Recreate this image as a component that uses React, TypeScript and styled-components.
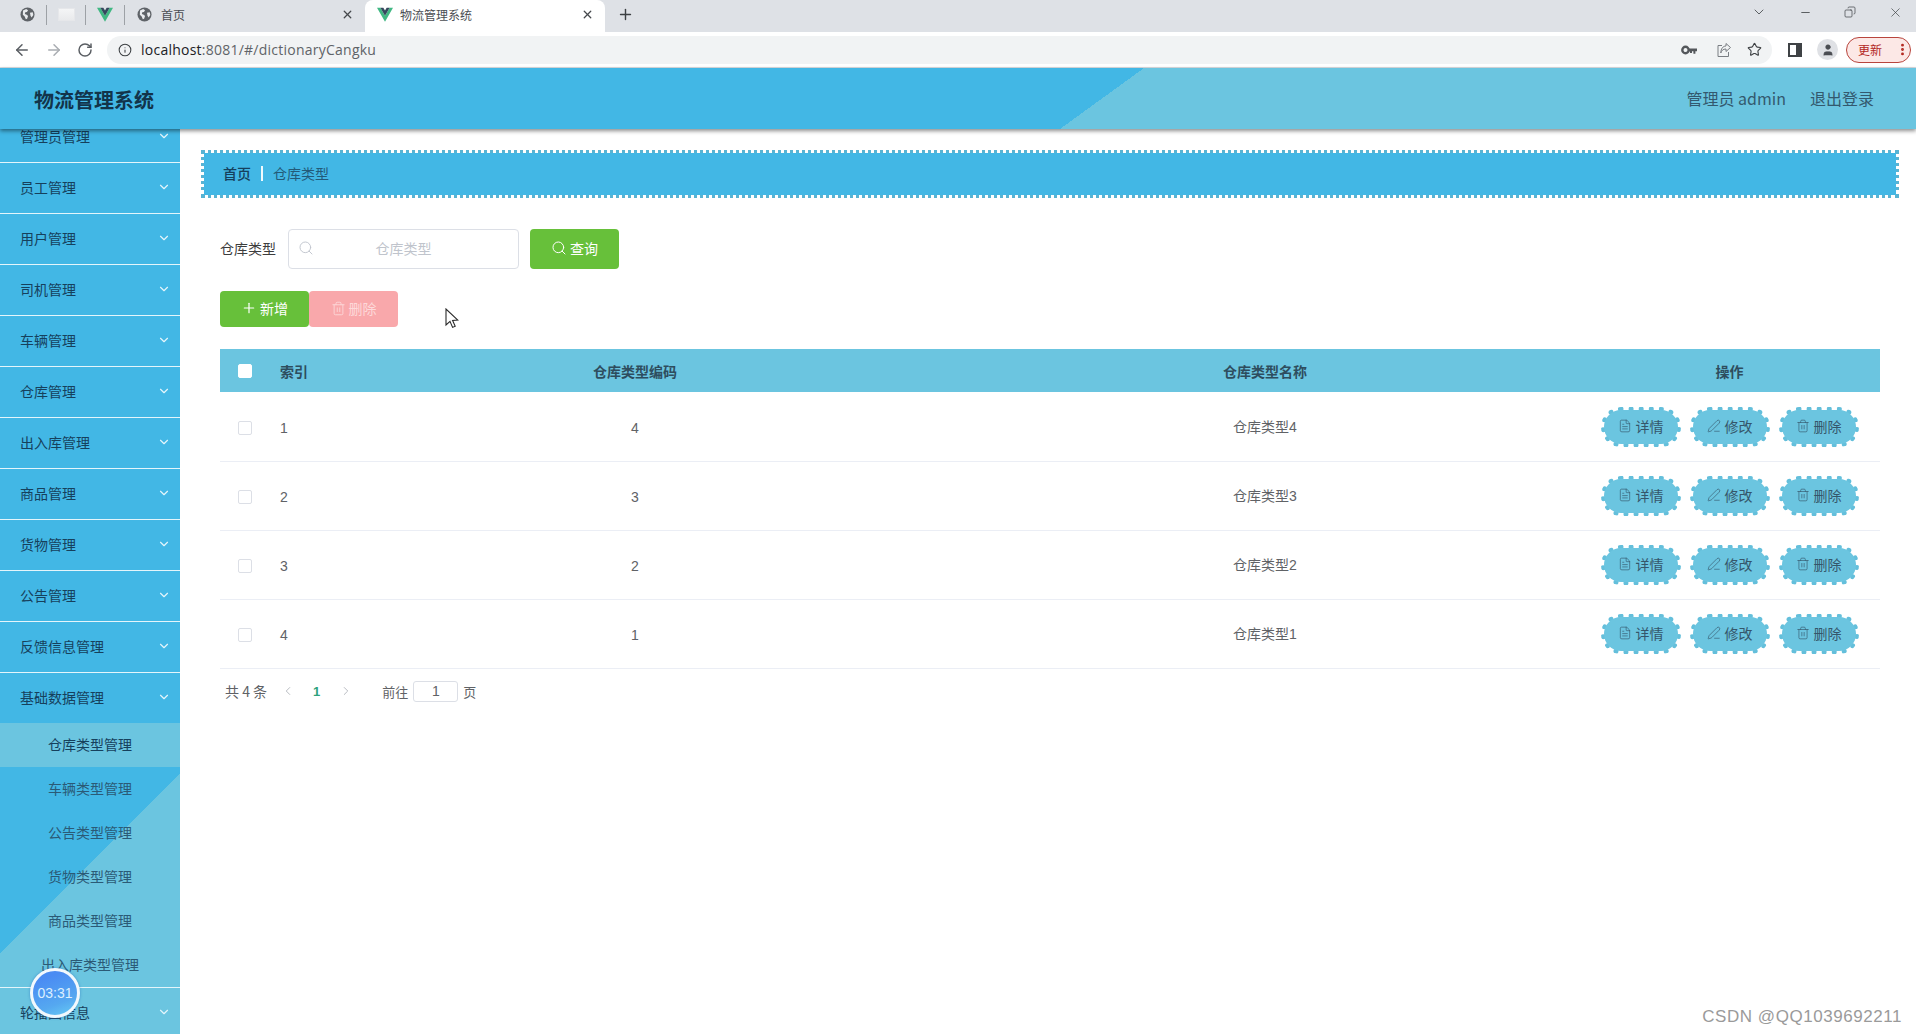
import React from "react";
import styled, { createGlobalStyle } from "styled-components";
import {
  ArrowLeft, ArrowRight, RotateCw, Info, Star, X, Plus, Minus,
  ChevronDown, ChevronLeft, ChevronRight, Search, Trash2, PenLine, FileText, EllipsisVertical, User, CopyIcon,
} from "lucide-react";

const CJK = `"Noto Sans CJK SC", "Liberation Sans", sans-serif`;
const TEXT = `"Liberation Sans", "Noto Sans CJK SC", sans-serif`;

const Global = createGlobalStyle`
  html, body { margin: 0; padding: 0; height: 100%; overflow: hidden; background: #fff; }
  * { box-sizing: border-box; }
  body { font-family: ${TEXT}; }
`;

const Page = styled.div`
  position: relative;
  width: 1916px;
  height: 1034px;
  display: flex;
  flex-direction: column;
  overflow: hidden;
`;

const TabStrip = styled.div`
  height: 32px;
  background: #dee1e6;
  display: flex;
  align-items: center;
  padding-left: 8px;
  flex: none;
`;
const Pinned = styled.div`
  width: 39px;
  height: 20px;
  margin-bottom: 3px;
  display: flex;
  align-items: center;
  justify-content: center;
  border-right: 1px solid #9da1a6;
  color: #5f6368;
`;
const BlankThumb = styled.div`
  width: 17px;
  height: 13px;
  background: linear-gradient(#f4f5f6, #e9eaec);
  border: 1px solid #e6e7ea;
`;
const Tab = styled.div<{ $active?: boolean }>`
  height: 32px;
  display: flex;
  align-items: center;
  gap: ${(p) => (p.$active ? "7px" : "9px")};
  width: ${(p) => (p.$active ? "240px" : "233px")};
  margin-left: ${(p) => (p.$active ? "7px" : "0")};
  padding: ${(p) => (p.$active ? "0 11px 3px 12px" : "0 4px 3px 12px")};
  background: ${(p) => (p.$active ? "#fff" : "transparent")};
  border-radius: 8px 8px 0 0;
  font-size: 12px;
  color: #4a4d52;
  font-family: ${CJK};
`;
const TabTitle = styled.span`
  flex: 1;
`;
const NewTab = styled.div`
  margin: 0 0 3px 12px;
  display: flex;
  color: #3c4043;
`;
const WindowControls = styled.div`
  margin-left: auto;
  display: flex;
  align-items: center;
  gap: 32px;
  padding: 0 13px 8px 0;
  color: #3c4043;
`;
const RestoreIcon = styled.div`
  display: flex;
  transform: scaleX(-1);
`;

const Toolbar = styled.div`
  height: 36px;
  background: #fff;
  display: flex;
  align-items: center;
  flex: none;
  padding-left: 13px;
  color: #5f6368;
  border-bottom: 1px solid #dadce0;
`;
const NavIcon = styled.div<{ $w?: number; $faded?: boolean }>`
  width: ${(p) => p.$w ?? 33}px;
  display: flex;
  color: ${(p) => (p.$faded ? "#a9adb2" : "#5a5e63")};
`;
const AddressBar = styled.div`
  width: 1665px;
  height: 28px;
  margin-left: -3px;
  background: #f1f3f4;
  border-radius: 14px;
  display: flex;
  align-items: center;
  padding-left: 11px;
  gap: 9px;
  flex: none;
`;
const Url = styled.div`
  font-family: "Open Sans", sans-serif;
  font-size: 14px;
  color: #5f6368;
  flex: 1;
  letter-spacing: 0.24px;
  b { font-weight: 400; color: #202124; }
`;
const AddressActions = styled.div`
  display: flex;
  align-items: center;
  gap: 17px;
  padding-right: 10px;
`;
const ShareSvg = styled.svg`
  flex: none;
  margin: 0 -2px 0 2px;
`;
const PanelIcon = styled.div`
  width: 14px;
  height: 14px;
  border: 2px solid #3f4245;
  border-right-width: 6px;
  margin-left: 16px;
  flex: none;
`;
const Avatar = styled.div`
  width: 21px;
  height: 21px;
  margin-left: 15px;
  border-radius: 50%;
  background: #dfe1e5;
  color: #4a4d52;
  display: flex;
  align-items: center;
  justify-content: center;
  flex: none;
`;
const UpdatePill = styled.div`
  margin-left: 8px;
  width: 65px;
  height: 26px;
  border: 1px solid #b8443c;
  border-radius: 13px;
  background: #fce8e6;
  color: #b3261e;
  font-family: ${CJK};
  font-size: 12px;
  display: flex;
  align-items: center;
  justify-content: space-between;
  padding-left: 11px;
  flex: none;
`;

const Header = styled.header`
  height: 61px;
  flex: none;
  position: relative;
  z-index: 3;
  display: flex;
  align-items: center;
  justify-content: space-between;
  padding: 0 42px 0 34px;
  background: linear-gradient(144deg, #42b7e5 57.2%, #6bc5e0 57.2%);
  box-shadow: 0 2px 4px rgba(0, 0, 0, 0.45);
`;
const Title = styled.div`
  font-family: ${CJK};
  font-size: 20px;
  font-weight: 700;
  color: #12344a;
  padding-top: 2px;
`;
const HeaderRight = styled.div`
  display: flex;
  gap: 24px;
  font-family: ${CJK};
  font-size: 16px;
  color: #33596e;
  padding-bottom: 2px;
`;

const Body = styled.div`
  flex: 1;
  min-height: 0;
  display: flex;
`;

const Sidebar = styled.aside`
  width: 180px;
  flex: none;
  overflow: hidden;
  background: linear-gradient(135deg, #42b7e5 76%, #6bc5e0 76%);
`;
const MenuList = styled.div`
  margin-top: -17px;
`;
const MenuItem = styled.div`
  height: 51px;
  border-bottom: 1px solid #e4f5fb;
  display: flex;
  align-items: center;
  justify-content: space-between;
  padding: 0 9px 2px 20px;
  font-family: ${CJK};
  font-size: 14px;
  color: #16405c;
  svg { color: #e4f5fb; }
`;
const OpenItem = styled(MenuItem)`
  height: 50px;
  border-bottom: 0;
`;
const SubMenu = styled.div`
  border-bottom: 1px solid #e4f5fb;
`;
const SubItem = styled.div<{ $active?: boolean }>`
  height: 44px;
  padding-bottom: 3px;
  display: flex;
  align-items: center;
  justify-content: center;
  font-family: ${CJK};
  font-size: 14px;
  color: ${(p) => (p.$active ? "#16405c" : "#2b5a76")};
  background: ${(p) => (p.$active ? "#6bc5e0" : "transparent")};
`;

const Main = styled.main`
  flex: 1;
  min-width: 0;
  padding: 21px 17px 0 21px;
`;
const Breadcrumb = styled.div`
  height: 48px;
  border: 3px dotted #58b3d3;
  background: #42b7e5;
  background-clip: padding-box;
  display: flex;
  align-items: center;
  padding: 0 0 2px 19px;
  font-family: ${CJK};
  font-size: 14px;
  font-weight: 500;
  color: #16405c;
`;
const CrumbSep = styled.span`
  width: 2px;
  height: 15px;
  background: #f0fafd;
  margin: 0 10px 0 10px;
`;
const CrumbCurrent = styled.span`
  font-weight: 400;
  color: #235a78;
`;

const Section = styled.section`
  padding: 31px 19px 0 19px;
`;
const SearchRow = styled.div`
  display: flex;
  align-items: center;
  height: 40px;
`;
const SearchLabel = styled.label`
  font-family: ${CJK};
  font-size: 14px;
  color: #3d3d3d;
  width: 68px;
  padding-bottom: 2px;
`;
const SearchBox = styled.div`
  width: 231px;
  height: 40px;
  border: 1px solid #dcdfe6;
  border-radius: 4px;
  display: flex;
  align-items: center;
  padding: 0 0 2px 9px;
  color: #c0c4cc;
`;
const Placeholder = styled.span`
  flex: 1;
  text-align: center;
  font-family: ${CJK};
  font-size: 14px;
  color: #c0c4cc;
  padding-right: 25px;
`;
const ActionButton = styled.div<{ $tone: "green" | "pink"; $h: number; $ml?: number }>`
  width: 89px;
  height: ${(p) => p.$h}px;
  margin-left: ${(p) => p.$ml ?? 0}px;
  padding-bottom: 2px;
  border-radius: 4px;
  background: ${(p) => (p.$tone === "green" ? "#67c03a" : "#f9a8ab")};
  color: ${(p) => (p.$tone === "green" ? "#fff" : "#fdd9da")};
  font-family: ${CJK};
  font-size: 14px;
  display: flex;
  align-items: center;
  justify-content: center;
  gap: 3px;
`;
const ButtonRow = styled.div`
  display: flex;
  margin-top: 22px;
`;
const Table = styled.div`
  margin-top: 22px;
`;
const Row = styled.div<{ $head?: boolean }>`
  display: grid;
  grid-template-columns: 50px 49px 632px 628px 301px;
  align-items: center;
  height: ${(p) => (p.$head ? 44 : 69)}px;
  background: ${(p) => (p.$head ? "linear-gradient(#6bc5e0 43px, #fff 43px)" : "#fff")};
  border-bottom: ${(p) => (p.$head ? "0" : "1px solid #ebeef5")};
  padding-bottom: ${(p) => (p.$head ? "1px" : "0")};
  font-family: ${TEXT};
  font-size: 14px;
  font-weight: ${(p) => (p.$head ? 700 : 400)};
  color: ${(p) => (p.$head ? "#2e4d5e" : "#606266")};
`;
const Cell = styled.div<{ $center?: boolean; $pad?: number; $top?: number; $bottom?: number }>`
  text-align: ${(p) => (p.$center ? "center" : "left")};
  padding: ${(p) => p.$top ?? 0}px 0 ${(p) => p.$bottom ?? 0}px ${(p) => p.$pad ?? 0}px;
  display: flex;
  justify-content: ${(p) => (p.$center ? "center" : "flex-start")};
  align-items: center;
`;
const Check = styled.div<{ $head?: boolean }>`
  width: 14px;
  height: 14px;
  border-radius: 2px;
  background: #fff;
  border: 1px solid ${(p) => (p.$head ? "#fff" : "#dcdfe6")};
`;
const Ops = styled.div`
  display: flex;
  gap: 9px;
  justify-content: center;
`;
const OpButton = styled.div`
  position: relative;
  isolation: isolate;
  width: 80px;
  height: 40px;
  border: 5px dotted #64bfdb;
  border-radius: 20px;
  color: #35566a;
  font-size: 14px;
  padding-bottom: 2px;
  display: flex;
  align-items: center;
  justify-content: center;
  gap: 4px;
  white-space: nowrap;
  &::before {
    content: "";
    position: absolute;
    inset: -2px;
    border-radius: 18px;
    background: #6bc5e0;
    z-index: -1;
  }
`;

const Pagination = styled.div`
  display: flex;
  align-items: center;
  height: 22px;
  margin-top: 11px;
  padding-left: 5px;
  font-family: ${CJK};
  font-size: 14px;
  color: #606266;
`;
const PagerArrow = styled.div<{ $ml: number }>`
  margin-left: ${(p) => p.$ml}px;
  display: flex;
  color: #b4b7bd;
`;
const PageNumber = styled.span`
  margin-left: 18px;
  font-size: 13px;
  font-weight: 700;
  color: #2ea27d;
  font-family: ${TEXT};
`;
const JumpInput = styled.div`
  width: 45px;
  height: 21px;
  margin: 0 5px;
  border: 1px solid #dcdfe6;
  border-radius: 3px;
  font-family: ${TEXT};
  font-size: 14px;
  display: flex;
  align-items: center;
  justify-content: center;
`;
const JumpText = styled.span<{ $ml?: number }>`
  margin-left: ${(p) => p.$ml ?? 0}px;
  font-size: 13px;
`;

const Timer = styled.div`
  position: absolute;
  left: 30px;
  top: 968px;
  width: 50px;
  height: 50px;
  border-radius: 50%;
  border: 3px solid #f2f8fd;
  background: linear-gradient(160deg, #4a8cf3 20%, #55a8f0 70%, #66ccf5);
  color: #dcefff;
  font-family: "Liberation Sans", sans-serif;
  font-size: 14px;
  display: flex;
  align-items: center;
  justify-content: center;
  z-index: 4;
  box-shadow: 0 0 3px rgba(40, 110, 190, 0.6);
`;
const Watermark = styled.div`
  position: absolute;
  right: 14px;
  bottom: 7px;
  font-family: "Liberation Sans", sans-serif;
  font-size: 17px;
  letter-spacing: 0.55px;
  color: #9a9a9a;
  z-index: 4;
`;
const Cursor = styled.svg`
  position: absolute;
  left: 445px;
  top: 308px;
  z-index: 4;
`;

const VueLogo = ({ size = 16 }: { size?: number }) => (
  <svg width={size} height={size} viewBox="0 0 24 22" style={{ flex: "none" }}>
    <path d="M0 0h5l7 12L19 0h5L12 21z" fill="#41b883" />
    <path d="M5 0h4.5L12 4.4 14.5 0H19l-7 12z" fill="#35495e" />
  </svg>
);

const GlobeFill = () => (
  <svg width={15} height={15} viewBox="0 0 16 16" style={{ flex: "none" }}>
    <circle cx="8" cy="8" r="7.5" fill="#5f6368" />
    <path d="M3.2 3.6 6.6 2.2 8.6 3.4 7.4 5.4 5.6 5.6 5.2 7.4 7.2 8.2 8.6 9.6 7.6 12.6 6.2 13 5 10 3 8.2z" fill="#e8eaed" />
    <path d="M10.6 6.2 13.6 5.6 14.2 8.6 12.4 11.2 11.2 9.4z" fill="#e8eaed" />
  </svg>
);

const KeyGlyph = () => (
  <svg width={16} height={10} viewBox="0 0 16 10" style={{ flex: "none" }}>
    <circle cx="4.5" cy="5" r="3.2" fill="none" stroke="#54575b" strokeWidth="2.4" />
    <path d="M8 3.6h8v2.6h-1.6v2.6h-2V6.2h-1.4v1.8H9V6.2H8z" fill="#54575b" />
  </svg>
);

const ShareGlyph = () => (
  <ShareSvg width={16} height={16} viewBox="0 0 16 16" fill="none" stroke="#7a7e83" strokeWidth="1">
    <path d="M6 3.5H2v11h10.5V10" />
    <path d="M10 1.5 14.5 5.5 10 9.5V7C7 7 5.5 8.5 4.8 11 4.8 7 6.8 4 10 4z" />
  </ShareSvg>
);

const menus = ["管理员管理", "员工管理", "用户管理", "司机管理", "车辆管理", "仓库管理", "出入库管理", "商品管理", "货物管理", "公告管理", "反馈信息管理"];
const subs = ["仓库类型管理", "车辆类型管理", "公告类型管理", "货物类型管理", "商品类型管理", "出入库类型管理"];
const rows = [
  { i: 1, code: 4, name: "仓库类型4" },
  { i: 2, code: 3, name: "仓库类型3" },
  { i: 3, code: 2, name: "仓库类型2" },
  { i: 4, code: 1, name: "仓库类型1" },
];

export default function App() {
  return (
    <Page>
      <Global />
      <TabStrip>
        <Pinned><GlobeFill /></Pinned>
        <Pinned><BlankThumb /></Pinned>
        <Pinned><VueLogo /></Pinned>
        <Tab>
          <GlobeFill />
          <TabTitle>首页</TabTitle>
          <X size={13} strokeWidth={2.4} color="#45484c" />
        </Tab>
        <Tab $active>
          <VueLogo />
          <TabTitle>物流管理系统</TabTitle>
          <X size={13} strokeWidth={2.4} color="#45484c" />
        </Tab>
        <NewTab><Plus size={17} strokeWidth={2} /></NewTab>
        <WindowControls>
          <ChevronDown size={16} strokeWidth={1.2} />
          <Minus size={13} strokeWidth={1.5} />
          <RestoreIcon><CopyIcon size={12} strokeWidth={1.4} /></RestoreIcon>
          <X size={15} strokeWidth={1.1} />
        </WindowControls>
      </TabStrip>
      <Toolbar>
        <NavIcon $w={32}><ArrowLeft size={18} strokeWidth={2} /></NavIcon>
        <NavIcon $w={32} $faded><ArrowRight size={18} strokeWidth={2} /></NavIcon>
        <NavIcon $w={33}><RotateCw size={16} strokeWidth={2.2} /></NavIcon>
        <AddressBar>
          <Info size={14} strokeWidth={1.8} color="#3c4043" />
          <Url><b>localhost</b>:8081/#/dictionaryCangku</Url>
          <AddressActions>
            <KeyGlyph />
            <ShareGlyph />
            <Star size={15} strokeWidth={1.8} color="#3f4245" />
          </AddressActions>
        </AddressBar>
        <PanelIcon />
        <Avatar><User size={14} fill="#4a4d52" strokeWidth={1} /></Avatar>
        <UpdatePill>更新<EllipsisVertical size={15} strokeWidth={2.6} /></UpdatePill>
      </Toolbar>
      <Header>
        <Title>物流管理系统</Title>
        <HeaderRight>
          <span>管理员 admin</span>
          <span>退出登录</span>
        </HeaderRight>
      </Header>
      <Body>
        <Sidebar>
          <MenuList>
            {menus.map((m) => (
              <MenuItem key={m}>{m}<ChevronDown size={14} /></MenuItem>
            ))}
            <OpenItem>基础数据管理<ChevronDown size={14} /></OpenItem>
            <SubMenu>
              {subs.map((s, i) => (
                <SubItem key={s} $active={i === 0}>{s}</SubItem>
              ))}
            </SubMenu>
            <MenuItem>轮播图信息<ChevronDown size={14} /></MenuItem>
          </MenuList>
        </Sidebar>
        <Main>
          <Breadcrumb>
            首页<CrumbSep /><CrumbCurrent>仓库类型</CrumbCurrent>
          </Breadcrumb>
          <Section>
            <SearchRow>
              <SearchLabel>仓库类型</SearchLabel>
              <SearchBox>
                <Search size={16} strokeWidth={1.4} />
                <Placeholder>仓库类型</Placeholder>
              </SearchBox>
              <ActionButton $tone="green" $h={40} $ml={11}>
                <Search size={16} strokeWidth={1.5} />查询
              </ActionButton>
            </SearchRow>
            <ButtonRow>
              <ActionButton $tone="green" $h={36}>
                <Plus size={16} strokeWidth={1.8} />新增
              </ActionButton>
              <ActionButton $tone="pink" $h={36}>
                <Trash2 size={15} strokeWidth={1.4} />删除
              </ActionButton>
            </ButtonRow>
            <Table>
              <Row $head>
                <Cell $center><Check $head /></Cell>
                <Cell $pad={10}>索引</Cell>
                <Cell $center>仓库类型编码</Cell>
                <Cell $center>仓库类型名称</Cell>
                <Cell $center>操作</Cell>
              </Row>
              {rows.map((r) => (
                <Row key={r.i}>
                  <Cell $center $top={2}><Check /></Cell>
                  <Cell $pad={10} $top={2}>{r.i}</Cell>
                  <Cell $center $top={2}>{r.code}</Cell>
                  <Cell $center $bottom={2}>{r.name}</Cell>
                  <Cell $center>
                    <Ops>
                      <OpButton><FileText size={14} strokeWidth={1.1} />详情</OpButton>
                      <OpButton><PenLine size={14} strokeWidth={1.1} />修改</OpButton>
                      <OpButton><Trash2 size={14} strokeWidth={1.1} />删除</OpButton>
                    </Ops>
                  </Cell>
                </Row>
              ))}
            </Table>
            <Pagination>
              <span>共 4 条</span>
              <PagerArrow $ml={14}><ChevronLeft size={14} strokeWidth={1.6} /></PagerArrow>
              <PageNumber>1</PageNumber>
              <PagerArrow $ml={19}><ChevronRight size={14} strokeWidth={1.6} /></PagerArrow>
              <JumpText $ml={29}>前往</JumpText>
              <JumpInput>1</JumpInput>
              <JumpText>页</JumpText>
            </Pagination>
          </Section>
        </Main>
      </Body>
      <Timer>03:31</Timer>
      <Watermark>CSDN @QQ1039692211</Watermark>
      <Cursor width="14" height="21" viewBox="0 0 14 21">
        <path d="M1 1v16l4-3.6 2.6 6 2.6-1.1-2.6-5.9 5.2-.3z" fill="#fff" stroke="#2a2a2a" strokeWidth="1.1" />
      </Cursor>
    </Page>
  );
}
